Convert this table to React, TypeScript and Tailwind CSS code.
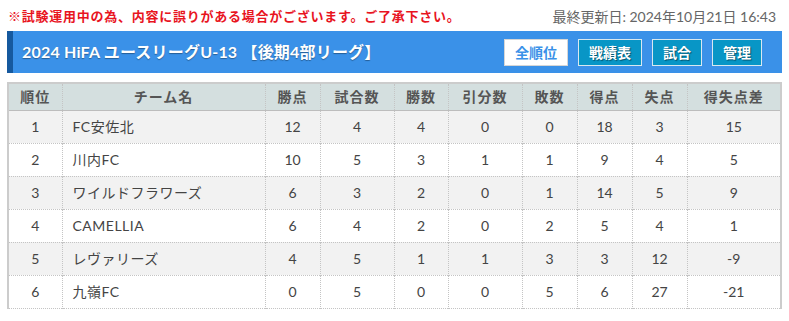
import React from "react";

const rows = [
  { r: 1, name: "FC安佐北", pts: 12, gp: 4, w: 4, d: 0, l: 0, gf: 18, ga: 3, diff: "15" },
  { r: 2, name: "川内FC", pts: 10, gp: 5, w: 3, d: 1, l: 1, gf: 9, ga: 4, diff: "5" },
  { r: 3, name: "ワイルドフラワーズ", pts: 6, gp: 3, w: 2, d: 0, l: 1, gf: 14, ga: 5, diff: "9" },
  { r: 4, name: "CAMELLIA", pts: 6, gp: 4, w: 2, d: 0, l: 2, gf: 5, ga: 4, diff: "1" },
  { r: 5, name: "レヴァリーズ", pts: 4, gp: 5, w: 1, d: 1, l: 3, gf: 3, ga: 12, diff: "-9" },
  { r: 6, name: "九嶺FC", pts: 0, gp: 5, w: 0, d: 0, l: 5, gf: 6, ga: 27, diff: "-21" },
];

const font = { fontFamily: '"Lato", "Noto Sans CJK JP", sans-serif' };

export default function App() {
  const cell = "border-r border-dotted border-[#c4c4c4] last:border-r-0 text-center";
  return (
    <div className="w-[789px] h-[321px] bg-white overflow-hidden" style={font}>
      <div className="flex items-center justify-between pl-[8px] pr-[13px] h-[31px] pt-[2px]">
        <span className="text-[13px] font-bold text-[#e8141e] tracking-[0.75px]">
          ※試験運用中の為、内容に誤りがある場合がございます。ご了承下さい。
        </span>
        <span className="text-[14px] text-[#666]">最終更新日: 2024年10月21日 16:43</span>
      </div>
      <div className="mx-[7px] h-[42px] flex items-center bg-[#3a91e8] border-l-[6px] border-[#16599e] pl-[9px] pr-[20px]">
        <div className="text-white font-bold text-[16px] [text-shadow:0_1px_1px_rgba(0,0,0,0.35)] tracking-[0.2px]">
          2024 HiFA ユースリーグU-13 【後期4部リーグ】
        </div>
        <div className="ml-auto flex gap-[10px]">
          <div className="w-[64px] h-[27px] bg-white border border-[#d6d6d6] flex items-center justify-center text-[14px] font-bold text-[#3a91e8]">
            全順位
          </div>
          <div className="w-[64px] h-[27px] bg-[#0896c6] border border-[#d8e8f0] flex items-center justify-center text-[14px] font-bold text-white [text-shadow:1px_1px_1px_rgba(0,0,0,0.45)]">
            戦績表
          </div>
          <div className="w-[50px] h-[27px] bg-[#0896c6] border border-[#d8e8f0] flex items-center justify-center text-[14px] font-bold text-white [text-shadow:1px_1px_1px_rgba(0,0,0,0.45)]">
            試合
          </div>
          <div className="w-[50px] h-[27px] bg-[#0896c6] border border-[#d8e8f0] flex items-center justify-center text-[14px] font-bold text-white [text-shadow:1px_1px_1px_rgba(0,0,0,0.45)]">
            管理
          </div>
        </div>
      </div>
      <div className="mx-[7px] mt-[9px] border-l-2 border-r-2 border-t-2 border-[#cccccc]">
        <table className="w-full border-collapse table-fixed text-[14px] text-[#444]">
          <colgroup>
            <col className="w-[53px]" />
            <col className="w-[203px]" />
            <col className="w-[55px]" />
            <col className="w-[74px]" />
            <col className="w-[54px]" />
            <col className="w-[74px]" />
            <col className="w-[55px]" />
            <col className="w-[55px]" />
            <col className="w-[55px]" />
            <col />
          </colgroup>
          <thead>
            <tr className="h-[26px] bg-[#d4dfdf] border-b border-[#bdbdbd]">
              {["順位", "チーム名", "勝点", "試合数", "勝数", "引分数", "敗数", "得点", "失点", "得失点差"].map((h) => (
                <th key={h} className={`${cell} font-bold text-[#555] tracking-[1px]`}>
                  {h}
                </th>
              ))}
            </tr>
          </thead>
          <tbody>
            {rows.map((r, i) => (
              <tr
                key={r.r}
                className={`h-[33px] border-b border-dotted border-[#c4c4c4] ${i % 2 === 0 ? "bg-[#f2f2f2]" : "bg-white"}`}
              >
                <td className={cell}>{r.r}</td>
                <td className="border-r border-dotted border-[#c4c4c4] text-left pl-[10px] tracking-[0.5px]">{r.name}</td>
                <td className={cell}>{r.pts}</td>
                <td className={cell}>{r.gp}</td>
                <td className={cell}>{r.w}</td>
                <td className={cell}>{r.d}</td>
                <td className={cell}>{r.l}</td>
                <td className={cell}>{r.gf}</td>
                <td className={cell}>{r.ga}</td>
                <td className={cell}>{r.diff}</td>
              </tr>
            ))}
          </tbody>
        </table>
      </div>
    </div>
  );
}
